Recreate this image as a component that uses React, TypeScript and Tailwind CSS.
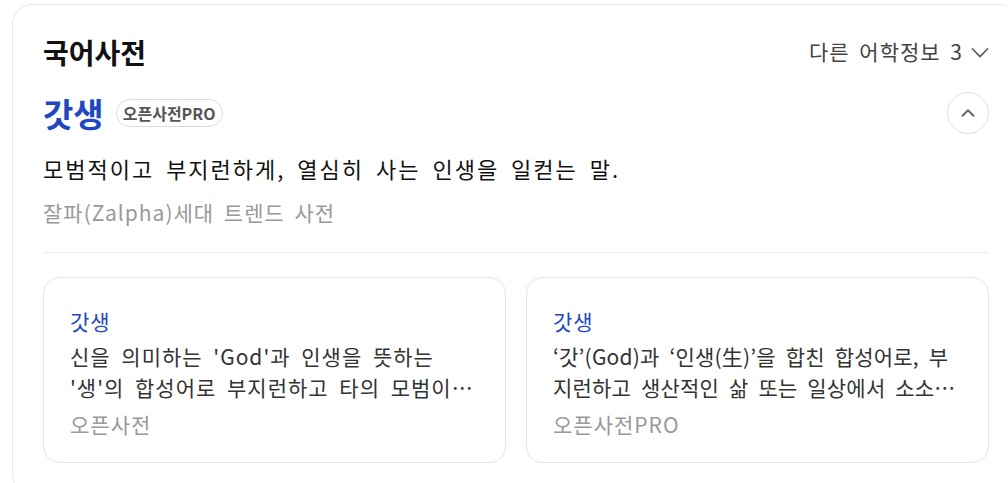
import { ChevronUp } from "lucide-react"

const related = [
  {
    word: "갓생",
    text: "신을 의미하는 'God'과 인생을 뜻하는 '생'의 합성어로 부지런하고 타의 모범이 되는 삶을 이르는 말.",
    source: "오픈사전",
    bodyClass: "tracking-[1px]",
  },
  {
    word: "갓생",
    text: "‘갓’(God)과 ‘인생(生)’을 합친 합성어로, 부지런하고 생산적인 삶 또는 일상에서 소소한 목표를 이루며 사는 것.",
    source: "오픈사전PRO",
    bodyClass: "tracking-[0.2px] break-all",
  },
]

function RelatedCard({
  word,
  text,
  source,
  bodyClass,
}: {
  word: string
  text: string
  source: string
  bodyClass: string
}) {
  return (
    <div className="rounded-[16px] border border-[#e6e6e6] px-[26px] pt-[28px] pb-[23px]">
      <div className="text-[21px] leading-[30px] tracking-[1px] text-[#1e48c0]">{word}</div>
      <p className={`mt-[5px] line-clamp-2 text-[21px] leading-[31px] text-[#333] [word-spacing:5px] ${bodyClass}`}>
        {text}
      </p>
      <div className="mt-[6px] text-[21px] leading-[30px] tracking-[1px] text-[#999]">{source}</div>
    </div>
  )
}

export default function App() {
  return (
    <div className="h-screen w-screen overflow-hidden bg-white pl-[12px] pt-[4px] font-['Noto_Sans_CJK_KR','Noto_Sans',sans-serif]">
      <div className="w-[1008px] rounded-[20px] border border-[#e8e8e8] px-[30px] pt-[30px] pb-[30px]">
        {/* header */}
        <div className="flex h-[34px] items-center justify-between">
          <h2 className="text-[28px] font-bold text-[#111]">국어사전</h2>
          <button className="flex items-center gap-[8px] text-[21px] tracking-[1px] text-[#444] [word-spacing:4px]">
            다른 어학정보 3
            <svg width="18" height="11" viewBox="0 0 18 11" fill="none" stroke="#555" strokeWidth="1.6">
              <polyline points="1,1.5 9,9.5 17,1.5" />
            </svg>
          </button>
        </div>

        {/* headword */}
        <div className="mt-[23px] flex h-[42px] items-center justify-between">
          <div className="flex items-center gap-[12px]">
            <span className="text-[33px] font-bold leading-none text-[#1e48c0]">갓생</span>
            <span className="rounded-full border border-[#dcdcdc] px-[6px] py-[2px] text-[16px] font-bold leading-[22px] text-[#555]">
              오픈사전PRO
            </span>
          </div>
          <button className="flex h-[42px] w-[42px] items-center justify-center rounded-full border border-[#e3e3e3] text-[#666]">
            <ChevronUp className="h-[22px] w-[22px]" strokeWidth={2.2} />
          </button>
        </div>

        {/* meaning */}
        <div className="border-b border-[#ececec] pb-[24px]">
          <p className="mt-[18px] text-[22px] leading-[32px] tracking-[2px] text-[#111] [word-spacing:5px]">
            모범적이고 부지런하게, 열심히 사는 인생을 일컫는 말.
          </p>
          <p className="mt-[12px] text-[21px] leading-[32px] tracking-[1px] text-[#999] [word-spacing:4px]">
            잘파(Zalpha)세대 트렌드 사전
          </p>
        </div>

        {/* related entries */}
        <div className="mt-[24px] grid grid-cols-2 gap-[20px]">
          {related.map((item, i) => (
            <RelatedCard key={i} {...item} />
          ))}
        </div>
      </div>
    </div>
  )
}
